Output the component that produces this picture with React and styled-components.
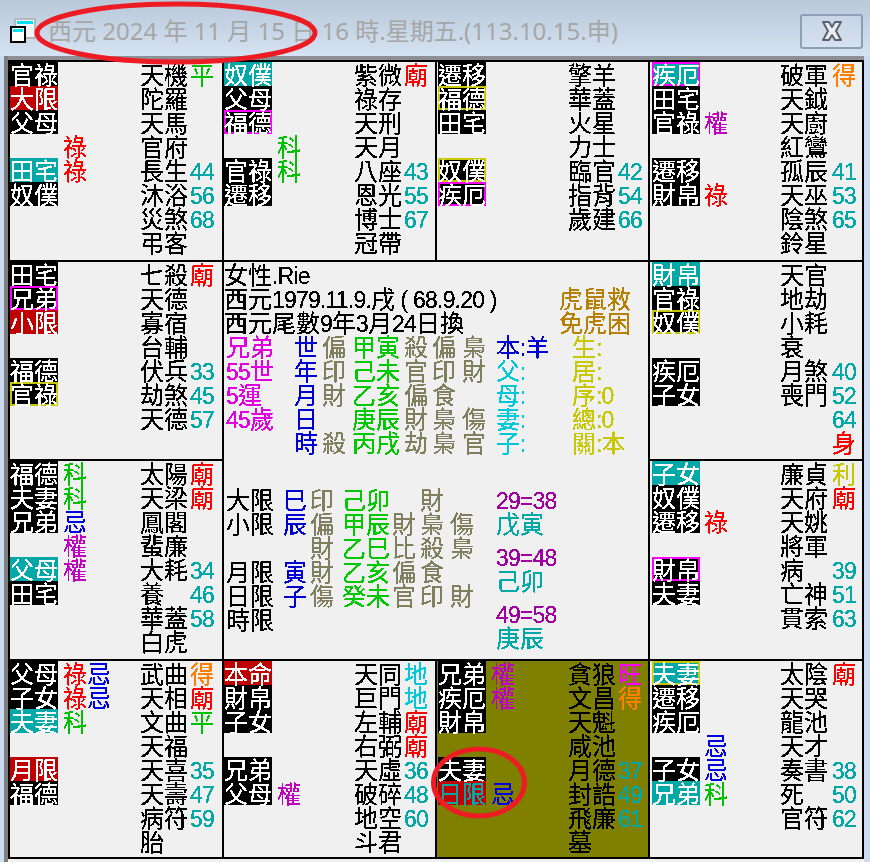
import React from 'react';
import styled, { createGlobalStyle } from 'styled-components';

const TONES = {
  red: '#ff0000',
  green: '#00c000',
  purple: '#c000c0',
  blue: '#0000e0',
  teal: '#00a8a8',
  orange: '#ff8000',
  yellow: '#c8c800',
  magenta: '#ff00ff',
  cyan: '#00c8d8',
  black: '#000000',
  gray: '#808060',
  navy: '#0000d0',
  pink: '#e000e0',
  plum: '#a000a0',
  gold: '#b88000',
  lime: '#00c800',
};

const LABEL_BG = { k: '#000000', r: '#c00000', t: '#00a8a8' };

const palaces = [
  {
    id: 'a', column: 1, row: 1,
    labels: [['官祿', 'k'], ['大限', 'r'], ['父母', 'k'], null, ['田宅', 't'], ['奴僕', 'k']],
    hua: [[, , , ['祿', 'red'], ['祿', 'red']]],
    stars: ['天機', '陀羅', '天馬', '官府', '長生', '沐浴', '災煞', '弔客'],
    marks: [['平', 'green'], , , , '44', '56', '68'],
  },
  {
    id: 'b', column: 2, row: 1,
    labels: [['奴僕', 't'], ['父母', 'k'], ['福德', 'k', 'magenta'], null, ['官祿', 'k'], ['遷移', 'k']],
    hua: [[, , , ['科', 'green'], ['科', 'green']]],
    stars: ['紫微', '祿存', '天刑', '天月', '八座', '恩光', '博士', '冠帶'],
    marks: [['廟', 'red'], , , , '43', '55', '67'],
  },
  {
    id: 'c', column: 3, row: 1, inset: 1,
    labels: [['遷移', 'k'], ['福德', 'k', 'yellow'], ['田宅', 'k'], null, ['奴僕', 'k', 'yellow'], ['疾厄', 'k', 'magenta']],
    hua: [[]],
    stars: ['擎羊', '華蓋', '火星', '力士', '臨官', '指背', '歲建'],
    marks: [, , , , '42', '54', '66'],
  },
  {
    id: 'd', column: 4, row: 1, inset: 2,
    labels: [['疾厄', 't', 'magenta'], ['田宅', 'k'], ['官祿', 'k'], null, ['遷移', 'k'], ['財帛', 'k']],
    hua: [[, , ['權', 'purple'], , , ['祿', 'red']]],
    stars: ['破軍', '天鉞', '天廚', '紅鸞', '孤辰', '天巫', '陰煞', '鈴星'],
    marks: [['得', 'orange'], , , , '41', '53', '65'],
  },
  {
    id: 'e', column: 1, row: 2,
    labels: [['田宅', 'k'], ['兄弟', 'k', 'magenta'], ['小限', 'r'], null, ['福德', 'k'], ['官祿', 'k', 'yellow']],
    hua: [[]],
    stars: ['七殺', '天德', '寡宿', '台輔', '伏兵', '劫煞', '天德'],
    marks: [['廟', 'red'], , , , '33', '45', '57'],
  },
  {
    id: 'f', column: 4, row: 2, inset: 2,
    labels: [['財帛', 't'], ['官祿', 'k'], ['奴僕', 'k', 'yellow'], null, ['疾厄', 'k'], ['子女', 'k']],
    hua: [[]],
    stars: ['天官', '地劫', '小耗', '衰', '月煞', '喪門'],
    marks: [, , , , '40', '52', '64', ['身', 'red']],
  },
  {
    id: 'g', column: 1, row: 3,
    labels: [['福德', 'k'], ['夫妻', 'k'], ['兄弟', 'k'], null, ['父母', 't'], ['田宅', 'k']],
    hua: [[['科', 'green'], ['科', 'green'], ['忌', 'blue'], ['權', 'purple'], ['權', 'purple']]],
    stars: ['太陽', '天梁', '鳳閣', '蜚廉', '大耗', '養', '華蓋', '白虎'],
    marks: [['廟', 'red'], ['廟', 'red'], , , '34', '46', '58'],
  },
  {
    id: 'h', column: 4, row: 3, inset: 2,
    labels: [['子女', 't'], ['奴僕', 'k'], ['遷移', 'k'], null, ['財帛', 'k', 'magenta'], ['夫妻', 'k']],
    hua: [[, , ['祿', 'red']]],
    stars: ['廉貞', '天府', '天姚', '將軍', '病', '亡神', '貫索'],
    marks: [['利', 'yellow'], ['廟', 'red'], , , '39', '51', '63'],
  },
  {
    id: 'i', column: 1, row: 4,
    labels: [['父母', 'k'], ['子女', 'k'], ['夫妻', 't'], null, ['月限', 'r'], ['福德', 'k']],
    hua: [
      [['祿', 'red'], ['祿', 'red'], ['科', 'green']],
      [['忌', 'blue'], ['忌', 'blue']],
    ],
    stars: ['武曲', '天相', '文曲', '天福', '天喜', '天壽', '病符', '胎'],
    marks: [['得', 'orange'], ['廟', 'red'], ['平', 'green'], , '35', '47', '59'],
  },
  {
    id: 'j', column: 2, row: 4,
    labels: [['本命', 'r'], ['財帛', 'k'], ['子女', 'k'], null, ['兄弟', 'k'], ['父母', 'k']],
    hua: [[, , , , , ['權', 'purple']]],
    stars: ['天同', '巨門', '左輔', '右弼', '天虛', '破碎', '地空', '斗君'],
    marks: [['地', 'cyan'], ['地', 'cyan'], ['廟', 'red'], ['廟', 'red'], '36', '48', '60'],
  },
  {
    id: 'k', column: 3, row: 4, inset: 1, olive: true,
    labels: [['兄弟', 'k'], ['疾厄', 'k'], ['財帛', 'k'], null, ['夫妻', 'k'], ['日限', 'r', null, 'teal']],
    hua: [[['權', 'purple'], ['權', 'purple'], , , , ['忌', 'blue']]],
    stars: ['貪狼', '文昌', '天魁', '咸池', '月德', '封誥', '飛廉', '墓'],
    marks: [['旺', 'magenta'], ['得', 'orange'], , , '37', '49', '61'],
  },
  {
    id: 'l', column: 4, row: 4, inset: 2,
    labels: [['夫妻', 't', 'yellow'], ['遷移', 'k'], ['疾厄', 'k'], null, ['子女', 'k'], ['兄弟', 't']],
    hua: [[, , , ['忌', 'blue'], ['忌', 'blue'], ['科', 'green']]],
    stars: ['太陰', '天哭', '龍池', '天才', '奏書', '死', '官符'],
    marks: [['廟', 'red'], , , , '38', '50', '62'],
  },
];

const upperLedger = [
  { width: 68, tone: 'pink', cells: ['兄弟', '55世', '5運', '45歲'] },
  { width: 28, tone: 'navy', cells: ['世', '年', '月', '日', '時'] },
  { width: 30, tone: 'gray', cells: ['偏', '印', '財', '', '殺'] },
  { width: 52, tone: 'lime', cells: ['甲寅', '己未', '乙亥', '庚辰', '丙戌'] },
  { width: 28, tone: 'gray', cells: ['殺', '官', '偏', '財', '劫'] },
  { width: 30, tone: 'gray', cells: ['偏', '印', '食', '梟', '梟'] },
  { width: 34, tone: 'gray', cells: ['梟', '財', '', '傷', '官'] },
  { width: 76, tone: 'cyan', cells: [['本:羊', 'navy'], '父:', '母:', '妻:', '子:'] },
  { width: 76, tone: 'yellow', cells: ['生:', '居:', '序:0', '總:0', '關:本'] },
];

const lowerLedger = [
  { width: 57, tone: 'black', cells: ['大限', '小限', '', '月限', '日限', '時限'] },
  { width: 27, tone: 'navy', cells: ['巳', '辰', '', '寅', '子'] },
  { width: 32, tone: 'gray', cells: ['印', '偏', '財', '財', '傷'] },
  { width: 50, tone: 'lime', cells: ['己卯', '甲辰', '乙巳', '乙亥', '癸未'] },
  { width: 28, tone: 'gray', cells: ['', '財', '比', '偏', '官'] },
  { width: 30, tone: 'gray', cells: ['財', '梟', '殺', '食', '印'] },
  { width: 46, tone: 'gray', cells: ['', '傷', '梟', '', '財'] },
];

const decades = [
  { span: '29=38', branch: '戊寅' },
  { span: '39=48', branch: '己卯' },
  { span: '49=58', branch: '庚辰' },
];

const GlobalStyle = createGlobalStyle`
  html, body {
    margin: 0;
    padding: 0;
    background: #f0f0f0;
  }
  * {
    box-sizing: border-box;
  }
`;

const Window = styled.div`
  position: relative;
  width: 870px;
  height: 862px;
  display: flex;
  flex-direction: column;
  background: #f0f0f0;
  font-family: 'Noto Sans CJK TC', sans-serif;
  font-size: 24px;
  line-height: 24px;
`;

const TitleBar = styled.div`
  height: 56px;
  display: flex;
  align-items: center;
  padding: 6px 7px 0 10px;
  background: linear-gradient(#b9c8da, #d4e2f1);
`;

const AppIcon = styled.svg`
  width: 26px;
  height: 26px;
  flex: none;
`;

const Title = styled.div`
  flex: 1;
  margin-left: 12px;
  font-family: 'Noto Sans', 'Noto Sans CJK TC', sans-serif;
  font-size: 24px;
  color: #a6a6a6;
  white-space: nowrap;
`;

const CloseButton = styled.button`
  width: 63px;
  height: 35px;
  padding: 0;
  display: flex;
  align-items: center;
  justify-content: center;
  border: 2px solid #8e9db8;
  border-radius: 3px;
  background: rgba(255, 255, 255, 0.12);
`;

const Body = styled.div`
  flex: 1;
  display: flex;
  align-items: flex-start;
  background: #f0f0f0;
`;

const LeftFrame = styled.div`
  width: 8px;
  align-self: stretch;
  border-left: 4px solid #ccdcf0;
  background: #808080;
`;

const RightFrame = styled.div`
  width: 6px;
  align-self: stretch;
  background: #ccdcf0;
`;

const Main = styled.div`
  width: 856px;
  border-top: 4px solid #8c9096;
`;

const Chart = styled.div`
  display: grid;
  grid-template-columns: 212px 211px 211px 212px;
  grid-template-rows: 198px 197px 198px 196px;
  gap: 2px;
  padding: 2px;
  background: #000000;
`;

const Palace = styled.div`
  grid-column: ${(p) => p.$column};
  grid-row: ${(p) => p.$row};
  padding-left: ${(p) => p.$inset || 0}px;
  background: ${(p) => (p.$olive ? '#808000' : '#f0f0f0')};
`;

const Slots = styled.div`
  display: grid;
  grid-template-columns: ${(p) => (p.$inset === 2 ? '52px 24px 52px 52px 24px' : '53px 24px 53px 50px 24px')};
  filter: url(#crisp);
`;

const Stack = styled.div`
  display: flex;
  flex-direction: column;
`;

const Line = styled.div`
  height: 24px;
  white-space: nowrap;
  color: ${(p) => TONES[p.$tone] || '#000000'};
`;

const Latin = styled.span`
  font-family: 'Liberation Sans', sans-serif;
  font-size: 23px;
  letter-spacing: -0.8px;
`;

const Label = styled.div`
  width: 48px;
  height: 24px;
  background: ${(p) => LABEL_BG[p.$kind] || 'transparent'};
  box-shadow: ${(p) => (p.$ring ? `inset 0 0 0 2px ${TONES[p.$ring]}` : 'none')};
  color: ${(p) => TONES[p.$ink] || '#ffffff'};
  white-space: nowrap;
`;

const LabelText = styled.div`
  filter: url(#crisp);
`;

const Center = styled.div`
  grid-column: 2 / 4;
  grid-row: 2 / 4;
  background: #f0f0f0;
`;

const Ink = styled.div`
  filter: url(#crisp);
`;

const Header = styled.div`
  display: grid;
  grid-template-columns: 335px 72px;
  grid-auto-rows: 24px;
  white-space: nowrap;
`;

const HeaderWide = styled.div`
  grid-column: 1 / 3;
`;

const Remark = styled.div`
  color: ${TONES.gold};
`;

const Ledger = styled.div`
  display: flex;
  padding-left: 2px;
  margin-top: ${(p) => p.$top}px;
`;

const Column = styled.div`
  flex: none;
  width: ${(p) => p.$width}px;
`;

const Decades = styled.div`
  display: flex;
  flex-direction: column;
  gap: 9px;
`;

const Decade = styled.div`
  display: flex;
  flex-direction: column;
`;

const Ring = styled.svg`
  position: absolute;
  pointer-events: none;
  left: ${(p) => p.$left}px;
  top: ${(p) => p.$top}px;
`;

const cellText = (cell) => (Array.isArray(cell) ? cell[0] : cell || '');
const cellTone = (cell, fallback) => (Array.isArray(cell) ? cell[1] : fallback);

// digits and punctuation run in the narrower latin face, the rest stays CJK
const mixed = (text) =>
  text.split(/([\x20-\x7e]+)/).map((part, i) =>
    /^[\x20-\x7e]+$/.test(part) ? <Latin key={i}>{part}</Latin> : part
  );

const LedgerColumns = ({ columns }) =>
  columns.map((col, i) => (
    <Column key={i} $width={col.width}>
      {col.cells.map((cell, j) => (
        <Line key={j} $tone={cellTone(cell, col.tone)}>
          {mixed(cellText(cell))}
        </Line>
      ))}
    </Column>
  ));

const PalaceCell = ({ data }) => {
  const hua = [0, 1].map((n) => data.hua[n] || []);
  const rows = Array.from({ length: 8 });
  return (
    <Palace $column={data.column} $row={data.row} $inset={data.inset} $olive={data.olive}>
      <Slots $inset={data.inset}>
        <Stack>
          {rows.map((_, i) => {
            const item = data.labels[i];
            if (!item) return <Label key={i} />;
            return (
              <Label key={i} $kind={item[1]} $ring={item[2]} $ink={item[3]}>
                <LabelText>{item[0]}</LabelText>
              </Label>
            );
          })}
        </Stack>
        {hua.map((list, n) => (
          <Stack key={n}>
            {rows.map((_, i) => (
              <Line key={i} $tone={cellTone(list[i], 'black')}>
                {cellText(list[i])}
              </Line>
            ))}
          </Stack>
        ))}
        <Stack>
          {rows.map((_, i) => (
            <Line key={i}>{data.stars[i] || ''}</Line>
          ))}
        </Stack>
        <Stack>
          {rows.map((_, i) => (
            <Line key={i} $tone={cellTone(data.marks[i], 'teal')}>
              {mixed(cellText(data.marks[i]))}
            </Line>
          ))}
        </Stack>
      </Slots>
    </Palace>
  );
};

const App = () => {
  return (
    <Window>
      <GlobalStyle />
      <svg width="0" height="0" style={{ position: 'absolute' }} aria-hidden="true">
        <filter id="crisp" colorInterpolationFilters="sRGB" x="-5%" y="-5%" width="110%" height="110%">
          <feComponentTransfer>
            <feFuncA type="discrete" tableValues="0 1 1" />
          </feComponentTransfer>
        </filter>
      </svg>

      <TitleBar>
        <AppIcon viewBox="0 0 26 26">
          <rect x="5" y="1" width="20" height="19" fill="#f2f4f6" stroke="#b4b8bc" strokeWidth="2" />
          <rect x="7" y="3" width="16" height="3" fill="#00e0f0" />
          <rect x="1" y="9" width="14" height="15" fill="#ffffff" stroke="#000000" strokeWidth="2" />
          <rect x="3" y="11" width="10" height="3" fill="#00e0f0" />
        </AppIcon>
        <Title>西元 2024 年 11 月 15 日 16 時.星期五.(113.10.15.申)</Title>
        <CloseButton aria-label="關閉">
          <svg width="24" height="20" viewBox="0 0 24 20">
            <path
              d="M3 1 H9 L12 6 L15 1 H21 L16 10 L21 19 H15 L12 14 L9 19 H3 L8 10 Z"
              fill="#ececec"
              stroke="#5a6274"
              strokeWidth="2"
              strokeLinejoin="round"
            />
          </svg>
        </CloseButton>
      </TitleBar>

      <Body>
        <LeftFrame />
        <Main>
          <Chart>
            {palaces.map((data) => (
              <PalaceCell key={data.id} data={data} />
            ))}
            <Center>
              <Ink>
                <Header>
                  <HeaderWide>{mixed('女性.Rie')}</HeaderWide>
                  <div>{mixed('西元1979.11.9.戌 ( 68.9.20 )')}</div>
                  <Remark>虎鼠救</Remark>
                  <div>{mixed('西元尾數9年3月24日換')}</div>
                  <Remark>免虎困</Remark>
                </Header>
                <Ledger $top={0}>
                  <LedgerColumns columns={upperLedger} />
                </Ledger>
                <Ledger $top={33}>
                  <LedgerColumns columns={lowerLedger} />
                  <Decades>
                    {decades.map((item) => (
                      <Decade key={item.span}>
                        <Line $tone="plum">{mixed(item.span)}</Line>
                        <Line $tone="teal">{item.branch}</Line>
                      </Decade>
                    ))}
                  </Decades>
                </Ledger>
              </Ink>
            </Center>
          </Chart>
        </Main>
        <RightFrame />
      </Body>

      <Ring $left={32} $top={0} width="290" height="66" viewBox="0 0 290 66">
        <ellipse cx="144" cy="33" rx="139" ry="29" fill="none" stroke="#ed1c24" strokeWidth="5" />
      </Ring>
      <Ring $left={430} $top={745} width="100" height="75" viewBox="0 0 100 75">
        <ellipse cx="49" cy="37.5" rx="45.5" ry="33.5" fill="none" stroke="#ed1c24" strokeWidth="5" />
      </Ring>
    </Window>
  );
};

export default App;
